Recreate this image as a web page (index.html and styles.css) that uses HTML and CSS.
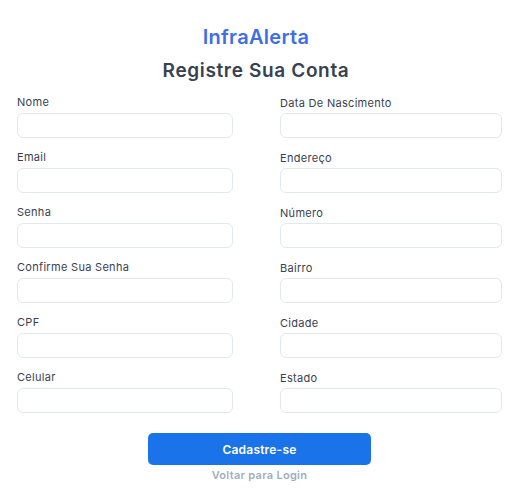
FILE: index.html
```html
<!DOCTYPE html>
<html lang="pt">
<head>
<meta charset="utf-8">
<link rel="stylesheet" href="styles.css">
</head>
<body>
<div class="page">
  <header class="head">
    <div class="brand">InfraAlerta</div>
    <h1 class="title">Registre Sua Conta</h1>
  </header>
  <form class="form">
    <div class="col">
      <div class="field"><label class="label">Nome</label><input class="input" type="text"></div>
      <div class="field"><label class="label">Email</label><input class="input" type="text"></div>
      <div class="field"><label class="label">Senha</label><input class="input" type="password"></div>
      <div class="field"><label class="label">Confirme Sua Senha</label><input class="input" type="password"></div>
      <div class="field"><label class="label">CPF</label><input class="input" type="text"></div>
      <div class="field"><label class="label">Celular</label><input class="input" type="text"></div>
    </div>
    <div class="col col-right">
      <div class="field"><label class="label">Data De Nascimento</label><input class="input" type="text"></div>
      <div class="field"><label class="label">Endereço</label><input class="input" type="text"></div>
      <div class="field"><label class="label">Número</label><input class="input" type="text"></div>
      <div class="field"><label class="label">Bairro</label><input class="input" type="text"></div>
      <div class="field"><label class="label">Cidade</label><input class="input" type="text"></div>
      <div class="field"><label class="label">Estado</label><input class="input" type="text"></div>
    </div>
  </form>
  <div class="actions">
    <button class="btn" type="button">Cadastre-se</button>
    <a class="back" href="#">Voltar para Login</a>
  </div>
</div>
</body>
</html>
```
FILE: styles.css
```css
* { box-sizing: border-box; }
body {
  margin: 0;
  background: #ffffff;
  font-family: "Inter", "Noto Sans", sans-serif;
  color: #374151;
}
.page {
  width: 518px;
  padding: 24px 16px 0 17px;
}
.head {
  display: flex;
  flex-direction: column;
  align-items: center;
  margin-right: 7px;
}
.brand {
  font-size: 20px;
  font-weight: 600;
  color: #3d6ee6;
  line-height: 26px;
  letter-spacing: 0.3px;
}
.title {
  margin: 8px 0 0;
  font-size: 19px;
  font-weight: 600;
  line-height: 26px;
  letter-spacing: 0.65px;
  color: #374151;
}
.form {
  display: grid;
  grid-template-columns: 216px 222px;
  column-gap: 47px;
  margin-top: 11px;
}
.col {
  display: flex;
  flex-direction: column;
  gap: 12px;
}
.col-right .label { padding-top: 1px; margin-bottom: 3px; }
.field {
  display: flex;
  flex-direction: column;
}
.label {
  font-size: 11px;
  line-height: 14px;
  margin-bottom: 4px;
  letter-spacing: 0.3px;
  color: #374151;
}
.input {
  height: 25px;
  border: 1px solid #e2e8f0;
  border-radius: 6px;
  background: #fff;
  font: inherit;
  padding: 0 8px;
}
.actions {
  display: flex;
  flex-direction: column;
  align-items: center;
  margin-top: 20px;
}
.btn {
  width: 223px;
  height: 32px;
  border: none;
  border-radius: 5px;
  background: #1a73e8;
  color: #fff;
  font-family: inherit;
  font-size: 12px;
  font-weight: 600;
  letter-spacing: 0.2px;
}
.back {
  margin-top: 3px;
  font-size: 11px;
  font-weight: 600;
  color: #a0aec0;
  text-decoration: none;
  line-height: 14px;
  letter-spacing: 0.3px;
}
```
